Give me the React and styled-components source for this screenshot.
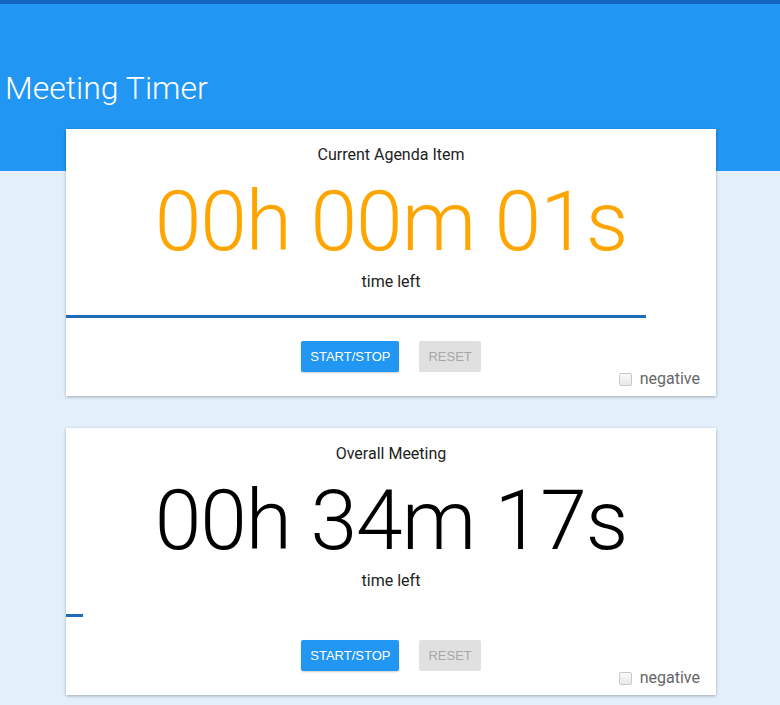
import React from "react";
import styled, { createGlobalStyle } from "styled-components";

const GlobalStyle = createGlobalStyle`
  html, body {
    margin: 0;
    padding: 0;
    background: #e3f0fc;
    font-family: Roboto, "Liberation Sans", sans-serif;
  }
`;

const Page = styled.div`
  min-height: 705px;
  background: #e3f0fc;
  border-top: 4px solid #1565c0;
`;

const Header = styled.header`
  background: #2196f3;
  height: 167px;
  padding: 0 5px;
  box-sizing: border-box;
`;

const Title = styled.h1`
  margin: 0;
  padding-top: 64px;
  font-size: 32px;
  font-weight: 300;
  color: #fff;
  line-height: 40px;
`;

const Cards = styled.main`
  display: flex;
  flex-direction: column;
  gap: 32px;
  width: 650px;
  margin: -42px 0 0 66px;
`;

const Card = styled.section`
  background: #fff;
  height: 267px;
  box-shadow: 0 1px 3px rgba(0, 0, 0, 0.3);
  display: flex;
  flex-direction: column;
  align-items: center;
`;

const CardTitle = styled.div`
  margin-top: 16px;
  font-size: 16px;
  line-height: 19px;
  color: #222;
`;

const Clock = styled.div`
  margin-top: 8px;
  font-size: 84px;
  font-weight: 300;
  letter-spacing: -1px;
  line-height: 100px;
  color: ${(p) => p.color};
`;

const Caption = styled.div`
  margin-top: 1px;
  font-size: 16px;
  line-height: 18px;
  color: #222;
`;

const Track = styled.div`
  align-self: stretch;
  height: 22px;
  margin-top: 5px;
  display: flex;
  align-items: flex-end;
`;

const Bar = styled.div`
  height: 3px;
  background: #1e6bb8;
`;

const Buttons = styled.div`
  display: flex;
  gap: 20px;
  margin-top: 23px;
`;

const Button = styled.button`
  height: 31px;
  padding: 0 9px;
  border: none;
  border-radius: 2px;
  font-family: "Liberation Sans", Arial, sans-serif;
  font-size: 13px;
  background: ${(p) => (p.primary ? "#2196f3" : "#e0e0e0")};
  color: ${(p) => (p.primary ? "#fff" : "#a8a8a8")};
  box-shadow: ${(p) => (p.primary ? "0 1px 2px rgba(0,0,0,0.2)" : "none")};
`;

const Negative = styled.label`
  align-self: flex-end;
  margin: -2px 16px 0 0;
  display: flex;
  align-items: center;
  gap: 8px;
  font-size: 16px;
  color: #666;
  line-height: 18px;
`;

const Box = styled.span`
  width: 11px;
  height: 11px;
  border: 1px solid #c8c8c8;
  border-radius: 2px;
  background: linear-gradient(#fafafa, #e8e8e8);
`;

const timers = [
  { title: "Current Agenda Item", time: "00h 00m 01s", color: "#ffa500", progress: 580 },
  { title: "Overall Meeting", time: "00h 34m 17s", color: "#000", progress: 17 },
];

export default function App() {
  return (
    <Page>
      <GlobalStyle />
      <Header>
        <Title>Meeting Timer</Title>
      </Header>
      <Cards>
        {timers.map((t) => (
          <Card key={t.title}>
            <CardTitle>{t.title}</CardTitle>
            <Clock color={t.color}>{t.time}</Clock>
            <Caption>time left</Caption>
            <Track>
              <Bar style={{ width: t.progress }} />
            </Track>
            <Buttons>
              <Button primary>START/STOP</Button>
              <Button>RESET</Button>
            </Buttons>
            <Negative>
              <Box />
              negative
            </Negative>
          </Card>
        ))}
      </Cards>
    </Page>
  );
}
